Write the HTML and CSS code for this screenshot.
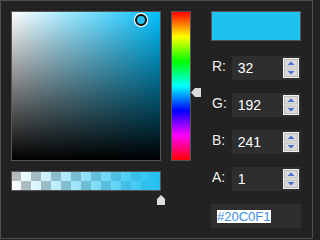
FILE: index.html
```html
<!DOCTYPE html>
<html>
<head>
<meta charset="utf-8">
<link rel="stylesheet" href="styles.css">
</head>
<body>
<div class="picker">
  <div class="left">
    <div class="sv">
      <div class="sv-marker" style="left:123px;top:2px"></div>
    </div>
    <div class="alpha"></div>
    <svg class="alpha-arrow" style="left:146px" width="8" height="10" viewBox="0 0 8 10"><polygon points="4,0 8,4 8,10 0,10 0,4" fill="#dcdcdc"/></svg>
  </div>
  <div class="hue-col">
    <div class="hue"></div>
    <svg class="hue-arrow" style="top:77px" width="10" height="9" viewBox="0 0 10 9"><polygon points="0,4.5 4,0 10,0 10,9 4,9" fill="#dcdcdc"/></svg>
  </div>
  <div class="right">
    <div class="preview"></div>
    <div class="row">
      <span class="label">R:</span>
      <div class="field"><span class="value">32</span>
        <svg class="spin" width="16" height="20" viewBox="0 0 16 20"><rect width="16" height="20" fill="#f4f4f4"/><rect x="1.5" y="1.5" width="13" height="7.5" fill="#dadada" stroke="#bcbcbc"/><rect x="1.5" y="11" width="13" height="7.5" fill="#dadada" stroke="#bcbcbc"/><polygon points="4.5,7 8,3.5 11.5,7" fill="#4d6fd4"/><polygon points="4.5,13 11.5,13 8,16.5" fill="#4d6fd4"/></svg>
      </div>
    </div>
    <div class="row">
      <span class="label">G:</span>
      <div class="field"><span class="value">192</span>
        <svg class="spin" width="16" height="20" viewBox="0 0 16 20"><rect width="16" height="20" fill="#f4f4f4"/><rect x="1.5" y="1.5" width="13" height="7.5" fill="#dadada" stroke="#bcbcbc"/><rect x="1.5" y="11" width="13" height="7.5" fill="#dadada" stroke="#bcbcbc"/><polygon points="4.5,7 8,3.5 11.5,7" fill="#4d6fd4"/><polygon points="4.5,13 11.5,13 8,16.5" fill="#4d6fd4"/></svg>
      </div>
    </div>
    <div class="row">
      <span class="label">B:</span>
      <div class="field"><span class="value">241</span>
        <svg class="spin" width="16" height="20" viewBox="0 0 16 20"><rect width="16" height="20" fill="#f4f4f4"/><rect x="1.5" y="1.5" width="13" height="7.5" fill="#dadada" stroke="#bcbcbc"/><rect x="1.5" y="11" width="13" height="7.5" fill="#dadada" stroke="#bcbcbc"/><polygon points="4.5,7 8,3.5 11.5,7" fill="#4d6fd4"/><polygon points="4.5,13 11.5,13 8,16.5" fill="#4d6fd4"/></svg>
      </div>
    </div>
    <div class="row">
      <span class="label">A:</span>
      <div class="field"><span class="value">1</span>
        <svg class="spin" width="16" height="20" viewBox="0 0 16 20"><rect width="16" height="20" fill="#f4f4f4"/><rect x="1.5" y="1.5" width="13" height="7.5" fill="#dadada" stroke="#bcbcbc"/><rect x="1.5" y="11" width="13" height="7.5" fill="#dadada" stroke="#bcbcbc"/><polygon points="4.5,7 8,3.5 11.5,7" fill="#4d6fd4"/><polygon points="4.5,13 11.5,13 8,16.5" fill="#4d6fd4"/></svg>
      </div>
    </div>
    <div class="hex"><span class="hex-sel">#20C0F1</span></div>
  </div>
</div>
</body>
</html>
```

FILE: styles.css
```css
html, body {
  margin: 0;
  padding: 0;
  background: #222222;
}

.picker {
  width: 313px;
  height: 239px;
  box-sizing: border-box;
  border: 1px solid #4f4f4f;
  background: #222222;
  padding: 10px;
  display: flex;
  align-items: flex-start;
  font-family: "Liberation Sans", Arial, sans-serif;
}

.left {
  position: relative;
  width: 150px;
}

.sv {
  position: relative;
  width: 150px;
  height: 150px;
  box-sizing: border-box;
  border: 1px solid #555555;
  background:
    linear-gradient(to top, #000000, rgba(0, 0, 0, 0)),
    linear-gradient(to right, #ffffff, rgb(0, 193, 255));
}

.sv-marker {
  position: absolute;
  width: 12px;
  height: 12px;
  box-sizing: border-box;
  border-radius: 50%;
  border: 2px solid #111111;
  background: #20c0f1;
  box-shadow: 0 0 0 1.2px #ffffff;
}

.alpha {
  margin-top: 10px;
  width: 150px;
  height: 20px;
  box-sizing: border-box;
  border: 1px solid #555555;
  background:
    linear-gradient(to right, rgba(32, 192, 241, 0), rgba(32, 192, 241, 1)),
    repeating-conic-gradient(#ffffff 0 25%, #bbbbbb 0 50%) -1px 0 / 20px 18px;
}

.alpha-arrow {
  position: absolute;
  top: 184px;
  display: block;
}

.hue-col {
  position: relative;
  width: 20px;
  margin-left: 10px;
}

.hue {
  width: 20px;
  height: 150px;
  box-sizing: border-box;
  border: 1px solid #555555;
  background: linear-gradient(to bottom, #ff0000, #ffff00 16.67%, #00ff00 33.33%, #00ffff 50%, #0000ff 66.67%, #ff00ff 83.33%, #ff0000);
}

.hue-arrow {
  position: absolute;
  left: 20px;
  display: block;
}

.right {
  width: 90px;
  margin-left: 20px;
  display: flex;
  flex-direction: column;
}

.preview {
  height: 30px;
  box-sizing: border-box;
  border: 1px solid #555555;
  background: #20c0f1;
  margin-bottom: 15px;
}

.row {
  display: flex;
  height: 24px;
  margin-bottom: 13px;
}

.label {
  width: 20px;
  line-height: 20px;
  font-size: 14px;
  color: #f0f0f0;
  padding-left: 1px;
}

.field {
  width: 70px;
  margin-left: auto;
  height: 24px;
  background: #2e2e2e;
  display: flex;
  align-items: center;
  padding-left: 6px;
  box-sizing: border-box;
}

.value {
  font-size: 14px;
  color: #ffffff;
}

.spin {
  display: block;
  margin-left: auto;
  margin-right: 2px;
}

.hex {
  height: 24px;
  background: #2e2e2e;
  display: flex;
  align-items: center;
  padding-left: 6px;
}

.hex-sel {
  display: inline-block;
  background: #ffffff;
  color: #3b8fe8;
  font-size: 13px;
  line-height: 13px;
  height: 13px;
  padding-right: 1px;
}
```
